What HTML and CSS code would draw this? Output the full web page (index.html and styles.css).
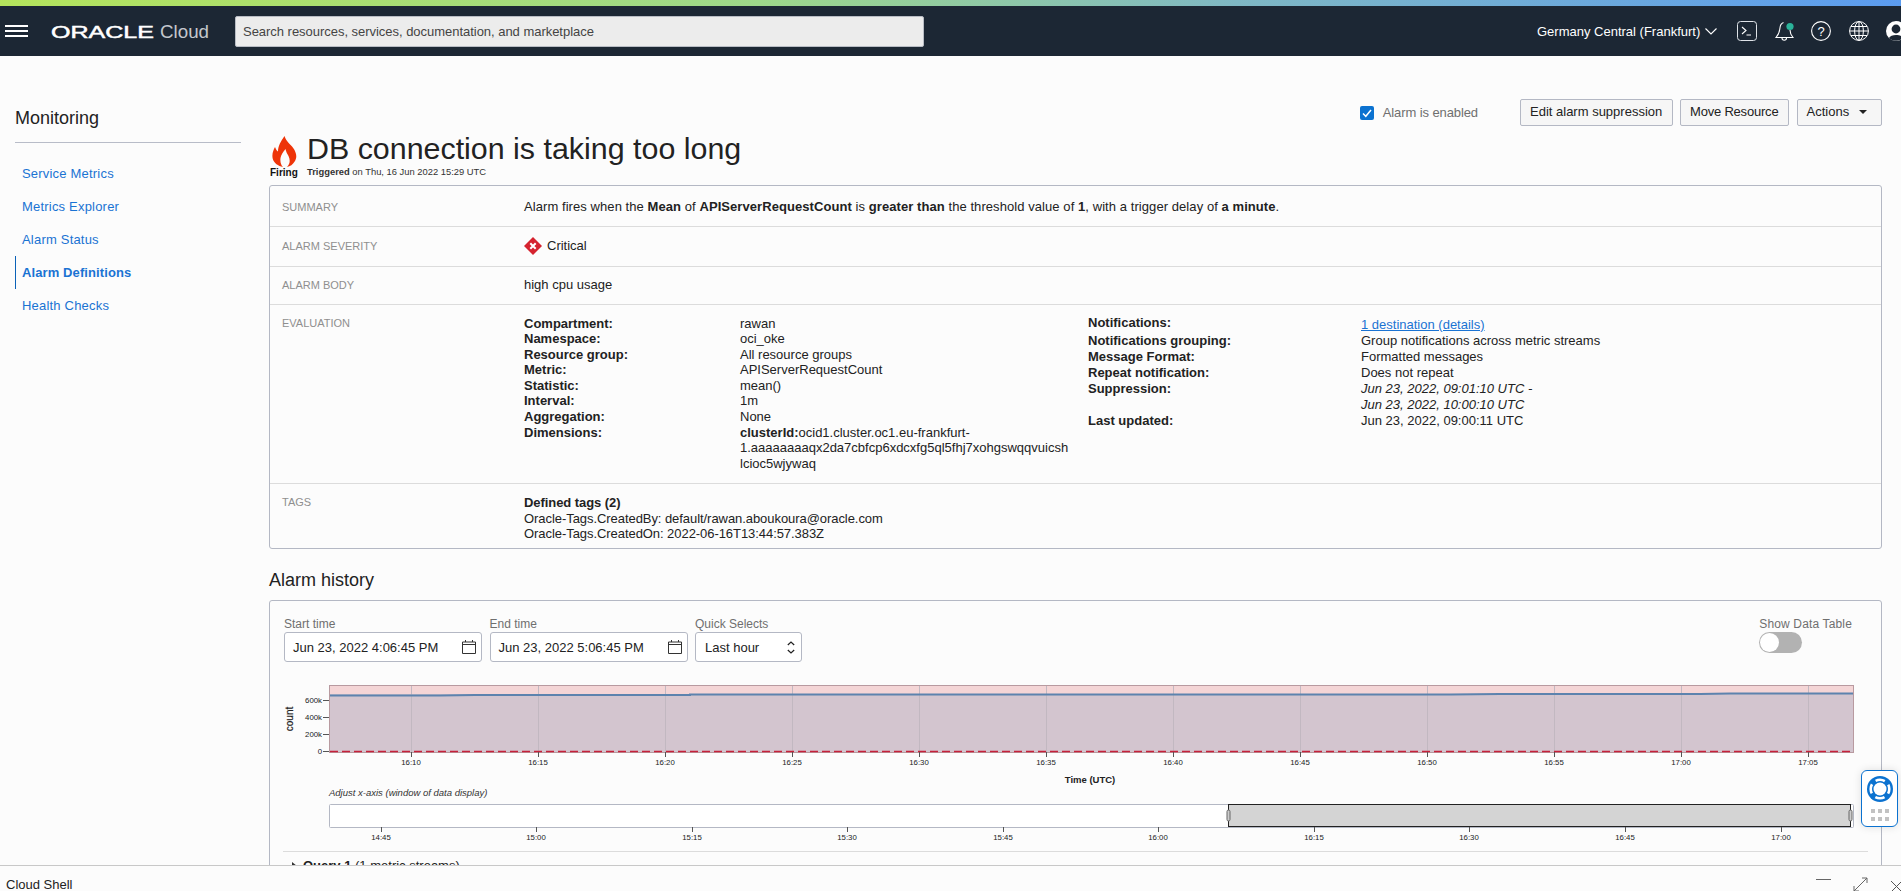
FILE: index.html
```html
<!DOCTYPE html>
<html lang="en">
<head>
    <meta charset="UTF-8">
    <title>Alarm Definitions - Monitoring</title>
    <link rel="stylesheet" href="styles.css">
</head>
<body>
    <div class="top-strip"></div>
    <header class="topbar">
        <button class="menu-btn" aria-label="Menu"><span></span><span></span><span></span></button>
        <svg class="logo" width="160" height="24" viewBox="0 0 160 24">
            <text x="0" y="19" class="logo-oracle" textLength="103" lengthAdjust="spacingAndGlyphs">ORACLE</text>
            <text x="109" y="19" class="logo-cloud" textLength="49" lengthAdjust="spacingAndGlyphs">Cloud</text>
        </svg>
        <div class="search">Search resources, services, documentation, and marketplace</div>
        <div class="topbar-right">
            <span class="region">Germany Central (Frankfurt)</span>
            <svg class="tb-icon" width="12" height="7" viewBox="0 0 12 7"><path d="M.5 .5 6 6 11.500 .5" fill="none" stroke="#fff" stroke-width="1.100"/></svg>
            <svg class="tb-icon shell-icon" width="20" height="20" viewBox="0 0 20 20">
                <rect x=".5" y=".5" width="19" height="19" rx="3" fill="none" stroke="#dfe3e8"/>
                <path d="M5 6 9 9.500 5 13M9.500 14H14" fill="none" stroke="#fff" stroke-width="1.100"/>
            </svg>
            <svg class="tb-icon bell-icon" width="20" height="20" viewBox="0 0 20 20">
                <path d="M8.500 1.500C5.500 2.500 5 5 4.800 8 4.600 11.500 3 14 1 16.500H18C16 14 15 12 15 9M7 17c0 3 4.500 3 4.500 0" fill="none" stroke="#fff" stroke-width="1.100"/>
                <circle cx="15" cy="5.500" r="3.600" fill="#2bb39a"/>
            </svg>
            <svg class="tb-icon help-icon" width="20" height="20" viewBox="0 0 20 20">
                <circle cx="10" cy="10" r="9.400" fill="none" stroke="#fff" stroke-width="1.100"/>
                <text x="10" y="14.500" class="help-mark">?</text>
            </svg>
            <svg class="tb-icon globe-icon" width="20" height="20" viewBox="0 0 20 20">
                <g fill="none" stroke="#fff" stroke-width="1">
                    <circle cx="10" cy="10" r="9.400"/>
                    <ellipse cx="10" cy="10" rx="4.400" ry="9.400"/>
                    <path d="M10 .6V19.400M.6 10H19.400M2 5.500H18M2 14.500H18"/>
                </g>
            </svg>
            <svg class="tb-icon avatar" width="20" height="20" viewBox="0 0 20 20">
                <circle cx="10" cy="10" r="10" fill="#fff"/>
                <circle cx="10" cy="8" r="4.400" fill="#1c2734"/>
                <path d="M3 17c1.500-4 12.500-4 14 0-3.500 3.500-10.500 3.500-14 0z" fill="#1c2734"/>
            </svg>
        </div>
    </header>

    <div class="page">
        <aside class="sidebar">
            <div class="side-title">Monitoring</div>
            <nav class="side-nav">
                <a>Service Metrics</a>
                <a>Metrics Explorer</a>
                <a>Alarm Status</a>
                <a class="active">Alarm Definitions</a>
                <a>Health Checks</a>
            </nav>
        </aside>

        <main class="main">
            <div class="action-row">
                <label class="enabled">
                    <svg width="14" height="14" viewBox="0 0 14 14">
                        <rect width="14" height="14" rx="2" fill="#0b72d0"/>
                        <path d="M3 7.500 5.800 10.300 11 4" fill="none" stroke="#fff" stroke-width="1.500"/>
                    </svg>
                    Alarm is enabled
                </label>
                <button class="btn btn-edit">Edit alarm suppression</button>
                <button class="btn btn-move">Move Resource</button>
                <button class="btn btn-actions">Actions <span class="caret"></span></button>
            </div>

            <div class="title-row">
                <div class="status">
                    <svg class="flame" width="25" height="31" viewBox="0 0 25 31">
                        <path d="M12.500 0C14 6 20 9 22.500 14 24.500 18 25 21 23 25 21 28.500 18 30.500 15 31 18 28 18.500 24 16.500 20 15.500 18 14 16 13.500 13 11 16 9 19 8.500 22 8 26 9 29 11 31 6 30 2 27 .8 23-.5 18 1.500 14 3 11 4 13 4.500 14.500 6 15.500 6 10 9 5 12.500 0Z" fill="#ee3408"/>
                    </svg>
                    <span class="status-text">Firing</span>
                </div>
                <div class="title-text">
                    <h1>DB connection is taking too long</h1>
                    <div class="trigger"><b>Triggered</b> on Thu, 16 Jun 2022 15:29 UTC</div>
                </div>
            </div>

            <section class="card info">
                <div class="info-row row-summary">
                    <div class="info-label">Summary</div>
                    <div class="summary-text">Alarm fires when the <b>Mean</b> of <b>APIServerRequestCount</b> is <b>greater than</b> the threshold value of <b>1</b>, with a trigger delay of <b>a minute</b>.</div>
                </div>
                <div class="info-row row-severity">
                    <div class="info-label">Alarm severity</div>
                    <div class="severity">
                        <svg width="18" height="18" viewBox="0 0 18 18">
                            <path d="M9 0 18 9 9 18 0 9Z" fill="#d5232f"/>
                            <path d="M6.300 6.300 11.700 11.700M11.700 6.300 6.300 11.700" stroke="#fff" stroke-width="2"/>
                        </svg>
                        Critical
                    </div>
                </div>
                <div class="info-row row-body">
                    <div class="info-label">Alarm body</div>
                    <div>high cpu usage</div>
                </div>
                <div class="info-row row-eval">
                    <div class="info-label">Evaluation</div>
                    <div class="eval-cols">
                        <dl class="eval-list eval-left">
                            <dt>Compartment:</dt><dd>rawan</dd>
                            <dt>Namespace:</dt><dd>oci_oke</dd>
                            <dt>Resource group:</dt><dd>All resource groups</dd>
                            <dt>Metric:</dt><dd>APIServerRequestCount</dd>
                            <dt>Statistic:</dt><dd>mean()</dd>
                            <dt>Interval:</dt><dd>1m</dd>
                            <dt>Aggregation:</dt><dd>None</dd>
                            <dt>Dimensions:</dt><dd class="dim"><b>clusterId:</b>ocid1.cluster.oc1.eu-frankfurt-1.aaaaaaaaqx2da7cbfcp6xdcxfg5ql5fhj7xohgswqqvuicshlcioc5wjywaq</dd>
                        </dl>
                        <dl class="eval-list eval-right">
                            <dt>Notifications:</dt><dd><a class="link">1 destination (details)</a></dd>
                            <dt>Notifications grouping:</dt><dd>Group notifications across metric streams</dd>
                            <dt>Message Format:</dt><dd>Formatted messages</dd>
                            <dt>Repeat notification:</dt><dd>Does not repeat</dd>
                            <dt>Suppression:</dt><dd><i>Jun 23, 2022, 09:01:10 UTC -<br>Jun 23, 2022, 10:00:10 UTC</i></dd>
                            <dt>Last updated:</dt><dd>Jun 23, 2022, 09:00:11 UTC</dd>
                        </dl>
                    </div>
                </div>
                <div class="info-row row-tags">
                    <div class="info-label">Tags</div>
                    <div class="tags-text">
                        <b>Defined tags (2)</b><br>
                        Oracle-Tags.CreatedBy: default/rawan.aboukoura@oracle.com<br>
                        Oracle-Tags.CreatedOn: 2022-06-16T13:44:57.383Z
                    </div>
                </div>
            </section>

            <h2>Alarm history</h2>

            <section class="card history">
                <div class="controls">
                    <div class="field">
                        <label>Start time</label>
                        <div class="input date-input">Jun 23, 2022 4:06:45 PM
                            <svg class="cal" width="14" height="14" viewBox="0 0 14 14"><path d="M.5 2H13.500V13.500H.5ZM.5 4.500H13.500M3.500 0V2M10.500 0V2" fill="none" stroke="#333"/></svg>
                        </div>
                    </div>
                    <div class="field">
                        <label>End time</label>
                        <div class="input date-input">Jun 23, 2022 5:06:45 PM
                            <svg class="cal" width="14" height="14" viewBox="0 0 14 14"><path d="M.5 2H13.500V13.500H.5ZM.5 4.500H13.500M3.500 0V2M10.500 0V2" fill="none" stroke="#333"/></svg>
                        </div>
                    </div>
                    <div class="field">
                        <label>Quick Selects</label>
                        <div class="input select-input">Last hour
                            <svg class="updown" width="8" height="13" viewBox="0 0 8 13"><path d="M.8 4 4 1 7.200 4M.8 9 4 12 7.200 9" fill="none" stroke="#222" stroke-width="1.200"/></svg>
                        </div>
                    </div>
                    <div class="field toggle-field">
                        <label>Show Data Table</label>
                        <div class="toggle"><span class="knob"></span></div>
                    </div>
                </div>

                <!-- chart uses page coordinates in the viewBox -->
                <svg class="chart" width="1611" height="176" viewBox="270 675 1611 176">
                    <rect x="329.500" y="685.500" width="1524" height="67" fill="#f4d5d6" stroke="#b89aa0"/>
                    <rect x="330" y="694" width="1523" height="58" fill="#d3c5cf"/>
                    <g stroke="#c2b8c1">
                        <path d="M411.500 686V752M538.500 686V752M665.500 686V752M792.500 686V752M919.500 686V752M1046.500 686V752M1173.500 686V752M1300.500 686V752M1427.500 686V752M1554.500 686V752M1681.500 686V752M1808.500 686V752"/>
                    </g>
                    <path d="M330 695.500H440L475 695H690V694.500H1450L1500 694H1700L1730 693.500H1853" fill="none" stroke="#5d83ae" stroke-width="2"/>
                    <path d="M330 751.500H1853" stroke="#c5213a" stroke-width="1.500" stroke-dasharray="8 4"/>
                    <g stroke="#555">
                        <path d="M323 700.500H329M323 717.500H329M323 734.500H329M323 751.500H329"/>
                        <path d="M411.500 752V757M538.500 752V757M665.500 752V757M792.500 752V757M919.500 752V757M1046.500 752V757M1173.500 752V757M1300.500 752V757M1427.500 752V757M1554.500 752V757M1681.500 752V757M1808.500 752V757"/>
                    </g>
                    <g class="tick y-tick">
                        <text x="322" y="703">600k</text>
                        <text x="322" y="720">400k</text>
                        <text x="322" y="737">200k</text>
                        <text x="322" y="754">0</text>
                    </g>
                    <g class="tick x-tick">
                        <text x="411" y="765">16:10</text>
                        <text x="538" y="765">16:15</text>
                        <text x="665" y="765">16:20</text>
                        <text x="792" y="765">16:25</text>
                        <text x="919" y="765">16:30</text>
                        <text x="1046" y="765">16:35</text>
                        <text x="1173" y="765">16:40</text>
                        <text x="1300" y="765">16:45</text>
                        <text x="1427" y="765">16:50</text>
                        <text x="1554" y="765">16:55</text>
                        <text x="1681" y="765">17:00</text>
                        <text x="1808" y="765">17:05</text>
                    </g>
                    <text class="axis-title axis-count" transform="translate(293 719) rotate(-90)">count</text>
                    <text class="axis-title" x="1090" y="783">Time (UTC)</text>
                    <text class="brush-title" x="329" y="796">Adjust x-axis (window of data display)</text>

                    <rect x="329.500" y="804.500" width="1524" height="23" rx="1" fill="#fff" stroke="#b4b8c4"/>
                    <rect x="1228.500" y="804.500" width="622" height="22" fill="#d4d4d4" stroke="#222"/>
                    <rect x="1227" y="810" width="3" height="11" rx="1.500" fill="#ccc" stroke="#666"/>
                    <rect x="1849" y="810" width="3" height="11" rx="1.500" fill="#ccc" stroke="#666"/>
                    <g stroke="#555">
                        <path d="M381.500 827V832M536.500 827V832M692.500 827V832M847.500 827V832M1003.500 827V832M1158.500 827V832M1314.500 827V832M1469.500 827V832M1625.500 827V832M1781.500 827V832"/>
                    </g>
                    <g class="tick x-tick">
                        <text x="381" y="840">14:45</text>
                        <text x="536" y="840">15:00</text>
                        <text x="692" y="840">15:15</text>
                        <text x="847" y="840">15:30</text>
                        <text x="1003" y="840">15:45</text>
                        <text x="1158" y="840">16:00</text>
                        <text x="1314" y="840">16:15</text>
                        <text x="1469" y="840">16:30</text>
                        <text x="1625" y="840">16:45</text>
                        <text x="1781" y="840">17:00</text>
                    </g>
                </svg>

                <div class="query-row"><span class="query-arrow"></span><b>Query 1</b> (1 metric streams)</div>
            </section>
        </main>
    </div>

    <div class="help-widget">
        <svg width="26" height="26" viewBox="0 0 26 26">
            <circle cx="13" cy="13" r="13" fill="#0b72d0"/>
            <circle cx="13" cy="13" r="6.500" fill="#fff"/>
            <circle cx="13" cy="13" r="9.300" fill="none" stroke="#fff" stroke-width="2.600" stroke-dasharray="9.600 5" stroke-dashoffset="4.800"/>
        </svg>
        <div class="help-dots"><i></i><i></i><i></i><i></i><i></i><i></i></div>
    </div>

    <footer class="shell-bar">
        <span>Cloud Shell</span>
        <div class="shell-actions">
            <svg class="shell-min" width="15" height="3" viewBox="0 0 15 3"><path d="M0 1.500H15" stroke="#666"/></svg>
            <svg width="15" height="15" viewBox="0 0 15 15"><path d="M1 14 14 1M9 1H14V6M1 9V14H6" fill="none" stroke="#666"/></svg>
            <svg class="shell-close" width="13" height="13" viewBox="0 0 13 13"><path d="M1 1 12 12M12 1 1 12" fill="none" stroke="#555"/></svg>
        </div>
    </footer>
</body>
</html>
```

FILE: styles.css
```css
* {
    box-sizing: border-box;
}

html, body {
    height: 100%;
}

body {
    margin: 0;
    overflow: hidden;
    background: #fcfcfc;
    font-family: "Liberation Sans", Arial, sans-serif;
    font-size: 13px;
    color: #222;
}

/* top bar */
.top-strip {
    height: 6px;
    background: linear-gradient(90deg, #b4e45c 0%, #9ed88a 40%, #7fb8c4 65%, #5b9cf0 100%);
}

.topbar {
    display: flex;
    align-items: center;
    height: 50px;
    background: #1c2734;
    color: #fff;
}

.menu-btn {
    display: flex;
    flex: none;
    flex-direction: column;
    justify-content: space-between;
    width: 23px;
    height: 12px;
    margin-left: 5px;
    padding: 0;
    background: none;
    border: none;
}

.menu-btn span {
    height: 2px;
    background: #fff;
}

.logo {
    flex: none;
    margin-left: 23px;
}

.logo-oracle {
    font-family: "Liberation Sans", Arial, sans-serif;
    font-size: 17px;
    fill: #fff;
    stroke: #fff;
    stroke-width: .5px;
}

.logo-cloud {
    font-family: "Liberation Sans", Arial, sans-serif;
    font-size: 18px;
    fill: #c4c8cd;
}

.search {
    display: flex;
    flex: none;
    align-items: center;
    width: 689px;
    height: 31px;
    margin-left: 24px;
    padding-left: 7px;
    background: #ececec;
    border: 1px solid #b8bcc4;
    border-radius: 2px;
    color: #444;
    font-size: 13px;
    letter-spacing: -.03px;
}

.topbar-right {
    display: flex;
    flex: none;
    align-items: center;
    margin-left: 613px;
}

.region {
    font-size: 13px;
    margin-right: 5px;
    white-space: nowrap;
}

.tb-icon {
    flex: none;
}

.shell-icon {
    margin-left: 20px;
}

.bell-icon {
    margin-left: 18px;
}

.help-icon {
    margin-left: 16px;
}

.globe-icon {
    margin-left: 18px;
}

.avatar {
    margin-left: 17px;
}

.help-mark {
    font-family: "Liberation Sans", Arial, sans-serif;
    font-size: 13px;
    fill: #fff;
    text-anchor: middle;
}

/* page */
.page {
    display: flex;
    padding-right: 19px;
}

.sidebar {
    flex: none;
    width: 226px;
    margin-left: 15px;
}

.side-title {
    height: 87px;
    padding-top: 52px;
    font-size: 18px;
    line-height: 20px;
    border-bottom: 1px solid #b8bcc8;
    color: #222;
}

.side-nav {
    margin-top: 13.500px;
}

.side-nav a {
    display: flex;
    align-items: center;
    height: 33px;
    padding-left: 7px;
    color: #1a73d3;
    font-size: 13px;
    letter-spacing: .2px;
}

.side-nav a.active {
    font-weight: bold;
    letter-spacing: .1px;
    border-left: 1px solid #0b62b8;
    padding-left: 6px;
}

.main {
    flex: 1;
    min-width: 0;
    margin-left: 28px;
}

.action-row {
    display: flex;
    align-items: center;
    justify-content: flex-end;
    gap: 7.500px;
    margin-top: 43px;
}

.enabled {
    display: flex;
    align-items: center;
    gap: 9px;
    margin-right: 34.500px;
    color: #6f6f6f;
    letter-spacing: -.1px;
}

.btn {
    display: flex;
    align-items: center;
    height: 27px;
    padding: 0 9px 2px;
    background: #f6f6f6;
    border: 1px solid #b4b8c4;
    border-radius: 2px;
    font-family: inherit;
    font-size: 13px;
    color: #222;
}

.btn-edit {
    width: 152.500px;
}

.btn-move {
    width: 109px;
    letter-spacing: -.2px;
}

.btn-actions {
    width: 85.500px;
}

.caret {
    width: 0;
    height: 0;
    margin-left: 10px;
    border-left: 4px solid transparent;
    border-right: 4px solid transparent;
    border-top: 4px solid #222;
}

.title-row {
    display: flex;
    margin-top: 5px;
    margin-bottom: 7px;
}

.status {
    display: flex;
    flex-direction: column;
    width: 38px;
    padding-top: 5px;
    padding-left: 1px;
}

.flame {
    margin-left: 2px;
    display: block;
}

.status-text {
    font-size: 10px;
    font-weight: bold;
    line-height: 11px;
    color: #111;
}

h1 {
    margin: 0;
    font-size: 30.400px;
    font-weight: normal;
    line-height: 35px;
    color: #222;
}

.trigger {
    font-size: 9.400px;
    line-height: 12px;
    color: #333;
}

.card {
    background: #fcfcfc;
    border: 1px solid #b4b8c4;
    border-radius: 3px;
}

.info-row {
    display: grid;
    grid-template-columns: 242px 1fr;
    padding: 0 12px;
    line-height: 15.600px;
    border-bottom: 1px solid #dcdcdc;
}

.info-row:last-child {
    border-bottom: none;
}

.row-summary {
    height: 41px;
    padding-top: 13px;
}

.row-severity {
    height: 40px;
    padding-top: 11px;
}

.row-body {
    height: 38px;
    padding-top: 10px;
}

.row-eval {
    height: 179px;
    padding-top: 10px;
}

.row-tags {
    height: 64px;
    padding-top: 11px;
}

.info-label {
    margin-top: 1px;
    color: #8f8f8f;
    font-size: 11px;
    text-transform: uppercase;
}

.row-tags .info-label {
    margin-top: 0;
}

.summary-text {
    letter-spacing: .07px;
}

.tags-text {
    letter-spacing: -.06px;
}

.severity {
    display: flex;
    align-items: center;
    gap: 5px;
    height: 17px;
    margin-top: -1px;
}

.eval-cols {
    display: flex;
}

.eval-list {
    display: grid;
    align-content: start;
    margin: 0;
}

.eval-list dt {
    font-weight: bold;
}

.eval-list dd {
    margin: 0;
}

.eval-left {
    grid-template-columns: 216px 331px;
    width: 564px;
    padding-top: .5px;
}

.eval-right {
    grid-template-columns: 273px 1fr;
    line-height: 16px;
}

.dim {
    overflow-wrap: anywhere;
}

.link {
    display: inline-block;
    padding-top: 1.500px;
    color: #1a73d3;
    text-decoration: underline;
}

h2 {
    margin: 20px 0 9px;
    font-size: 18px;
    font-weight: normal;
    line-height: 22px;
    color: #222;
}

/* alarm history */
.history {
    height: 400px;
    overflow: hidden;
}

.controls {
    display: flex;
    gap: 7.500px;
    padding: 15px 29px 0 14px;
}

.field label {
    display: block;
    font-size: 12px;
    line-height: 16px;
    color: #6f6f6f;
}

.input {
    display: flex;
    align-items: center;
    height: 30px;
    background: #fff;
    border: 1px solid #b4b8c4;
    border-radius: 3px;
    color: #222;
}

.date-input {
    width: 198px;
    padding: 0 5px 0 8px;
}

.select-input {
    width: 107px;
    padding: 0 6px 0 9px;
}

.cal, .updown {
    margin-left: auto;
}

.toggle-field {
    margin-left: auto;
}

.toggle-field label {
    letter-spacing: .15px;
}

.toggle {
    position: relative;
    width: 43px;
    height: 21px;
    background: #b2b2b2;
    border-radius: 11px;
}

.knob {
    position: absolute;
    left: 1px;
    top: 1px;
    width: 19px;
    height: 19px;
    background: #fff;
    border-radius: 50%;
}

.chart {
    display: block;
    margin-top: 13px;
}

.tick text {
    font-family: "Liberation Sans", Arial, sans-serif;
    font-size: 7.800px;
    fill: #222;
}

.y-tick text {
    text-anchor: end;
}

.x-tick text {
    text-anchor: middle;
}

.axis-title {
    font-family: "Liberation Sans", Arial, sans-serif;
    font-size: 9.500px;
    font-weight: bold;
    fill: #222;
    text-anchor: middle;
}

.axis-count {
    font-weight: normal;
    font-size: 10px;
    stroke: #222;
    stroke-width: .2px;
}

.brush-title {
    font-family: "Liberation Sans", Arial, sans-serif;
    font-size: 9.500px;
    font-style: italic;
    fill: #333;
}

.query-row {
    margin: 0 13px;
    padding-top: 6px;
    padding-left: 9px;
    border-top: 1px solid #dcdcdc;
    font-size: 13px;
    line-height: 16px;
}

.query-arrow {
    display: inline-block;
    width: 0;
    height: 0;
    margin-right: 6px;
    border-top: 4px solid transparent;
    border-bottom: 4px solid transparent;
    border-left: 5px solid #333;
}

/* floating bits */
.help-widget {
    position: fixed;
    left: 1861px;
    top: 770px;
    width: 37px;
    height: 57px;
    padding: 5px 0 0 5px;
    background: #fff;
    border: 1px solid #0b72d0;
    border-radius: 6px;
    box-shadow: 0 0 8px rgba(0, 0, 0, .12);
}

.help-widget svg {
    display: block;
}

.help-dots {
    display: grid;
    grid-template-columns: repeat(3, 4px);
    gap: 4px 3px;
    margin: 7px 0 0 4px;
}

.help-dots i {
    height: 4px;
    background: #c2c2c2;
}

.shell-bar {
    position: fixed;
    left: 0;
    right: 0;
    bottom: 0;
    display: flex;
    align-items: flex-start;
    height: 26px;
    padding: 11px 0 0 6px;
    overflow: hidden;
    background: #fcfcfc;
    border-top: 1px solid #c8c8c8;
    color: #222;
    line-height: 15px;
}

.shell-actions {
    display: flex;
    align-items: flex-start;
    gap: 22px;
    margin-left: auto;
    margin-right: -2px;
}

.shell-min {
    margin-top: 1px;
}

.shell-close {
    margin-top: 3px;
}
```
